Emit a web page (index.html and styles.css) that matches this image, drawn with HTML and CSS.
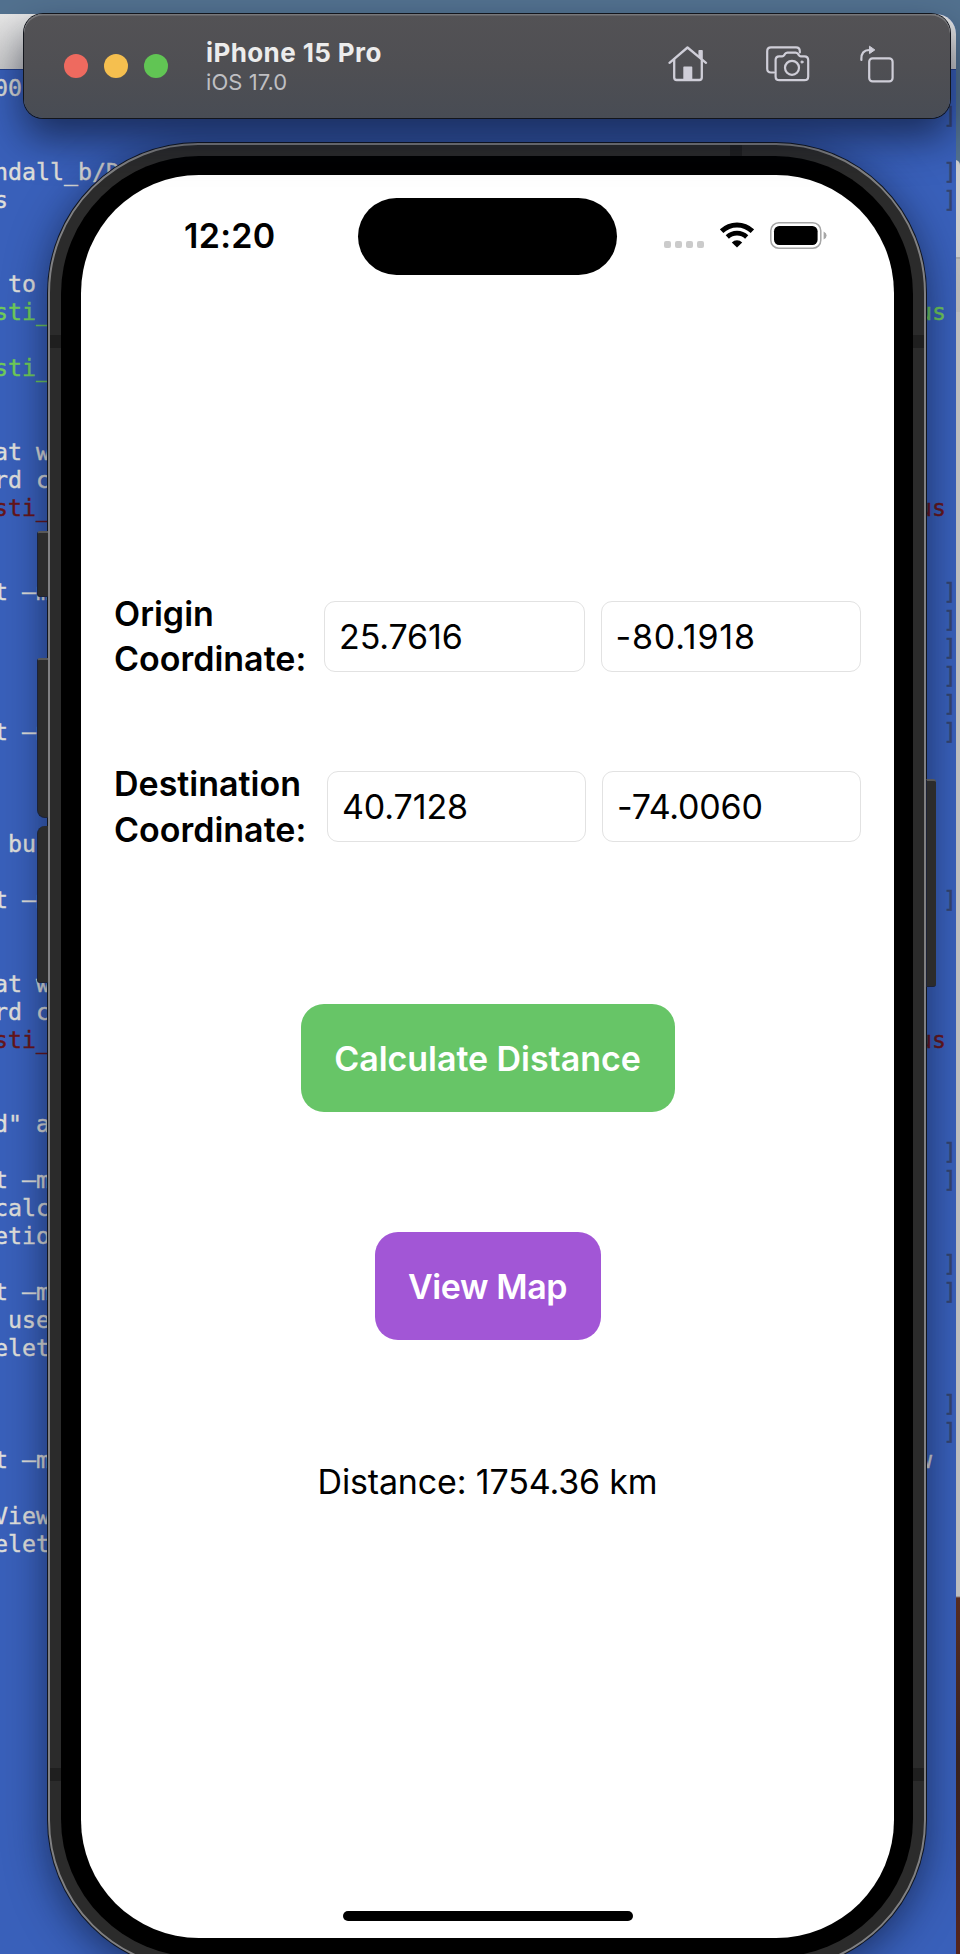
FILE: index.html
```html
<!DOCTYPE html>
<html lang="en">
<head>
<meta charset="utf-8">
<title>iPhone 15 Pro</title>
<link rel="stylesheet" href="styles.css">
</head>
<body>
<div class="desktop">
  <div class="side-window"></div>
  <div class="terminal">
    <div class="terminal-bar"></div>
    <div class="terminal-body">
<pre class="term-left">00


ndall_b/D
s


 to
<span class="ok">sti_</span>

<span class="ok">sti_</span>


at w
rd c
<span class="err">sti_</span>


t –m




t –m



 but

t –m


at w
rd c
<span class="err">sti_</span>


d" a

t –m
calc
etio

t –m
 use
elet



t –m

View
elet</pre>
<pre class="term-right"><span class="dim">  ]</span>

<span class="dim">  ]</span>
<span class="dim">  ]</span>



<span class="ok">us </span>






<span class="err">us </span>


<span class="dim">  ]</span>
<span class="dim">  ]</span>
<span class="dim">  ]</span>
<span class="dim">  ]</span>
<span class="dim">  ]</span>
<span class="dim">  ]</span>





<span class="dim">  ]</span>




<span class="err">us </span>



<span class="dim">  ]</span>
<span class="dim">  ]</span>


<span class="dim">  ]</span>
<span class="dim">  ]</span>



<span class="dim">  ]</span>
<span class="dim">  ]</span>
w  </pre>
    </div>
  </div>

  <div class="phone">
    <i class="band band-top"></i>
    <i class="band band-l1"></i>
    <i class="band band-r1"></i>
    <i class="band band-l2"></i>
    <i class="band band-r2"></i>
    <div class="bezel">
      <div class="screen">
        <div class="status">
          <span class="time">12:20</span>
          <span class="island"></span>
          <span class="signal"><i></i><i></i><i></i><i></i></span>
          <svg class="wifi" width="34" height="26" viewBox="0 0 34 26">
            <path d="M1.6 9.2A22 22 0 0 1 32.4 9.2" fill="none" stroke="#000" stroke-width="5"/>
            <path d="M7.3 15A14 14 0 0 1 26.7 15" fill="none" stroke="#000" stroke-width="4.6"/>
            <path d="M17 25.6L11.8 20.4A7.6 7.6 0 0 1 22.2 20.4Z"/>
          </svg>
          <svg class="battery" width="57" height="27" viewBox="0 0 57 27">
            <rect x=".8" y=".8" width="50" height="25.4" rx="8" fill="none" stroke="#a6a6a6" stroke-width="1.5"/>
            <rect x="4" y="4" width="43.6" height="19" rx="5.2"/>
            <path d="M53.6 9.4Q56.6 10.8 56.6 13.5T53.6 17.6Z" fill="#a6a6a6"/>
          </svg>
        </div>
        <main class="form">
          <div class="row">
            <label class="label">Origin<br>Coordinate:</label>
            <div class="field">25.7616</div>
            <div class="field f-neg f-loose">-80.1918</div>
          </div>
          <div class="row">
            <label class="label label-wide">Destination<br>Coordinate:</label>
            <div class="field">40.7128</div>
            <div class="field f-neg">-74.0060</div>
          </div>
          <button class="btn btn-green">Calculate Distance</button>
          <button class="btn btn-purple">View Map</button>
          <p class="result">Distance: 1754.36 km</p>
        </main>
        <div class="home-indicator"></div>
      </div>
    </div>
  </div>
  <i class="key key-action"></i>
  <i class="key key-up"></i>
  <i class="key key-down"></i>
  <i class="key key-power"></i>

  <header class="toolbar">
    <div class="lights"><i class="red"></i><i class="amber"></i><i class="green"></i></div>
    <div class="titles">
      <div class="title">iPhone 15 Pro</div>
      <div class="subtitle">iOS 17.0</div>
    </div>
    <div class="tools">
      <svg width="40" height="36" viewBox="0 0 40 36" fill="none" stroke="#cfced8" stroke-width="2.3" stroke-linecap="round" stroke-linejoin="round">
        <path d="M1.5 16.8L19.5 1.5L38 16.8"/>
        <path d="M6.2 13.5V31.5Q6.2 34 8.7 34H31.3Q33.8 34 33.8 31.5V13.5"/>
        <path d="M31.2 4.8H34V12L31.2 10Z" fill="#cfced8" stroke-width="1.6"/>
        <path d="M16 21.2H23.6V34H16Z" fill="#cfced8" stroke-width="1.4"/>
      </svg>
      <svg width="44" height="36" viewBox="0 0 44 36" fill="none" stroke="#cfced8" stroke-width="2.2" stroke-linecap="round" stroke-linejoin="round">
        <path d="M8 26.5H5Q1.2 26.5 1.2 22.7V5.2Q1.2 1.4 5 1.4H30Q33.8 1.4 33.8 5.2V6.5"/>
        <path d="M9.6 14Q9.6 10.4 13.2 10.4H16.2Q17.4 10.4 18.2 9.2L19.2 7.7Q20 6.6 21.4 6.6H29.6Q31 6.6 31.8 7.7L32.8 9.2Q33.6 10.4 34.8 10.4H38.4Q42.2 10.4 42.2 14V30.4Q42.2 34.2 38.4 34.2H13.4Q9.6 34.2 9.6 30.4Z"/>
        <circle cx="26" cy="21.8" r="7"/>
        <circle cx="36" cy="16" r="1.1" fill="#cfced8" stroke-width="1"/>
      </svg>
      <svg width="34" height="38" viewBox="0 0 34 38" fill="none" stroke="#cfced8" stroke-width="2.2" stroke-linecap="round" stroke-linejoin="round">
        <rect x="9.2" y="13.4" width="23.4" height="23" rx="3.4"/>
        <path d="M1.4 15Q.8 5 9.5 5"/>
        <path d="M9.8 1.4L14.8 4.9L9.8 8.4Z" fill="#cfced8" stroke-width="1"/>
      </svg>
    </div>
  </header>
</div>
</body>
</html>
```

FILE: styles.css
```css
* { box-sizing: border-box; }
body { margin: 0; }

.desktop {
  position: relative;
  width: 960px;
  height: 1954px;
  overflow: hidden;
  background: #52718f;
  font-family: Inter, "Liberation Sans", sans-serif;
}

/* background windows */
.side-window {
  position: absolute;
  right: 0;
  top: 160px;
  width: 12px;
  height: 1794px;
  border-radius: 0 5px 0 0;
  background: linear-gradient(#cfcfcf 0 97px, #acacac 97px 99px, #bdbdbd 99px 152px, #c4c4c4 152px 1436px, #5a2e22 1438px, #3a2420 1600px, #54251e);
}
.terminal {
  position: absolute;
  left: -20px;
  top: 14px;
  width: 976px;
  height: 1960px;
  border-radius: 0 20px 0 0;
  overflow: hidden;
  background: #3960ba;
}
.terminal-bar {
  height: 56px;
  background: linear-gradient(#e6e6e6, #cbcbcb);
  border-bottom: 1px solid #24428e;
}
.terminal-body {
  display: flex;
  justify-content: space-between;
  padding: 4px 0 0 14px;
}
.terminal-body pre {
  margin: 0;
  font: 23.25px/28px "DejaVu Sans Mono", monospace;
  color: #dfdfdb;
  -webkit-text-stroke: .4px;
}
.terminal-body .term-right { margin: 28px -4px 0 0; }
.ok { color: #70cc58; }
.err { color: #661519; }
.dim { color: #34436f; word-spacing: -1.5px; }

/* device */
.key {
  position: absolute;
  left: 37px;
  width: 11px;
  background: #2c2c2c;
  border: 1px solid #1c2236;
  border-top: 2px solid #585858;
  border-right: 0;
  border-radius: 3px 0 0 3px;
}
.key-action { top: 531px; height: 66px; }
.key-up { top: 658px; height: 160px; border-radius: 3px 0 0 8px; }
.key-down { top: 826px; height: 157px; border-radius: 8px 0 0 3px; border-top: 0; }
.key-power { left: 926px; width: 10px; top: 779px; height: 208px; border-radius: 0 3px 3px 0; }

.phone {
  position: absolute;
  left: 48px;
  top: 143px;
  width: 878px;
  height: 1827px;
  padding: 11px;
  border: 2px solid #808082;
  border-radius: 150px;
  background: #2b2b2b;
  box-shadow: 0 0 0 1px #10151f, 0 8px 42px rgba(8, 16, 40, .62);
}
.band { position: absolute; background: #1f1f1f; }
.band-top { left: 680px; top: 0; width: 12px; height: 11px; }
.band-l1, .band-r1 { top: 190px; width: 11px; height: 13px; }
.band-l2, .band-r2 { top: 1623px; width: 11px; height: 13px; }
.band-l1, .band-l2 { left: 0; }
.band-r1, .band-r2 { right: 0; }
.bezel {
  position: relative;
  height: 100%;
  padding: 19px 19px 19px 20px;
  border-radius: 138px;
  background: #000;
}
.screen {
  height: 1763px;
  display: flex;
  flex-direction: column;
  background: #fff;
  border-radius: 118px;
  color: #000;
}
.status {
  display: flex;
  align-items: flex-start;
  height: 100px;
  padding: 23px 0 0 103px;
}
.time {
  width: 174px;
  font-size: 34px;
  line-height: 41px;
  padding-top: 17px;
  font-weight: 600;
  letter-spacing: .3px;
}
.island {
  width: 259px;
  height: 77px;
  border-radius: 39px;
  background: #000;
}
.signal { display: flex; gap: 4px; margin: 43px 0 0 47px; }
.signal i { width: 7px; height: 7px; border-radius: 2px; background: #cbcbcb; }
.wifi { margin: 24px 0 0 16px; }
.battery { margin: 24px 0 0 16px; }

.form {
  flex: 1;
  display: flex;
  flex-direction: column;
  align-items: center;
  padding: 315.5px 33px 0 33px;
}
.row {
  display: flex;
  align-items: center;
  align-self: stretch;
  height: 91px;
  margin-bottom: 79.5px;
}
.label {
  width: 210px;
  font-size: 34px;
  line-height: 45.4px;
  font-weight: 600;
  letter-spacing: 0;
  white-space: nowrap;
}
.label-wide { width: 213px; }
.field {
  flex: 1;
  height: 71px;
  padding: 0 14px;
  border: 1.4px solid #e2e2e2;
  border-radius: 11px;
  font-size: 34px;
  line-height: 69px;
  letter-spacing: -.1px;
}
.f-neg { margin-left: 16px; letter-spacing: -.2px; }
.f-loose { letter-spacing: .8px; }
.btn {
  height: 108px;
  padding: 0;
  border: 0;
  border-radius: 23px;
  color: #fff;
  font: 600 34px Inter, "Liberation Sans", sans-serif;
  letter-spacing: -.05px;
}
.btn-green { width: 374px; margin-top: 72.5px; background: #67c567; }
.btn-purple { width: 226px; margin-top: 120px; background: #a256d6; letter-spacing: -.4px; }
.result {
  margin: 121px 0 0;
  font-size: 34px;
  line-height: 41px;
  letter-spacing: -.15px;
}
.home-indicator {
  align-self: center;
  width: 290px;
  height: 10px;
  margin-bottom: 17px;
  border-radius: 5px;
  background: #000;
}

/* simulator toolbar */
.toolbar {
  position: absolute;
  left: 24px;
  top: 14px;
  width: 926px;
  height: 104px;
  display: flex;
  align-items: center;
  padding: 0 56px 0 40px;
  border-radius: 19px;
  background: linear-gradient(#535255, #4f4f53 50%, #484c54);
  box-shadow: 0 0 0 1px #12151c, inset 0 1.5px 0 #77777a, 0 20px 40px rgba(8, 14, 36, .62);
}
.lights { display: flex; gap: 16px; }
.lights i { width: 24px; height: 24px; border-radius: 50%; }
.lights .red { background: #ee6a5f; }
.lights .amber { background: #f5bf4f; }
.lights .green { background: #61c554; }
.titles { margin-left: 38px; padding-top: 2px; white-space: nowrap; }
.title { color: #ececec; font-size: 26px; line-height: 30px; font-weight: 700; letter-spacing: .4px; }
.subtitle { color: #bfbfc2; font-size: 22px; line-height: 28px; letter-spacing: .05px; }
.tools {
  flex: 1;
  display: flex;
  justify-content: flex-end;
  align-items: center;
  padding-bottom: 5px;
}
.tools svg + svg { margin-left: 58px; }
.tools svg + svg + svg { margin-left: 50px; }
```
